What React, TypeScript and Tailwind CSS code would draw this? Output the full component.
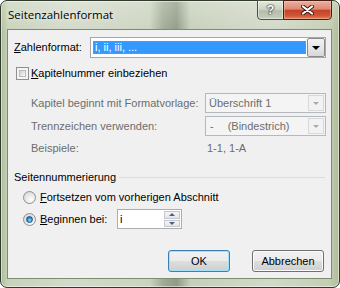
import React from "react";

function Checkbox() {
  return (
    <div className="w-[13px] h-[13px] border border-[#8e8f8f] bg-[#f4f4f4] p-[2px] shrink-0">
      <div className="w-full h-full border border-[#b8bcc0] bg-[linear-gradient(135deg,#cfcfcf_0%,#e9e9e9_60%,#f8f8f8_100%)]" />
    </div>
  );
}

function Radio({ checked }: { checked?: boolean }) {
  return (
    <div className="w-[13px] h-[13px] rounded-full border border-[#8e8f8f] bg-[radial-gradient(circle_at_65%_70%,#ffffff_0%,#e4e4e4_55%,#cfcfcf_100%)] flex items-center justify-center shrink-0">
      {checked && (
        <div className="w-[7px] h-[7px] rounded-full border border-[#1d4f7f] bg-[radial-gradient(circle_at_55%_65%,#8fe3ff_0%,#2c8ad6_55%,#144f8a_100%)]" />
      )}
    </div>
  );
}

function DisabledSelect({ children }: { children: React.ReactNode }) {
  return (
    <div className="w-[121px] h-[20px] border border-[#b5b9bd] bg-[#f4f4f4] flex items-center">
      <div className="flex-1 pl-[3px] text-[#6d6d6d] whitespace-nowrap">{children}</div>
      <div className="w-[16px] h-[16px] mr-[1px] border border-[#d9d9d9] bg-[#f2f2f2] flex items-center justify-center">
        <div className="w-0 h-0 border-l-[3px] border-r-[3px] border-t-[3px] border-l-transparent border-r-transparent border-t-[#a9a9a9]" />
      </div>
    </div>
  );
}

function Button({ children, primary, w }: { children: React.ReactNode; primary?: boolean; w: string }) {
  return (
    <div
      className={
        w +
        " h-[22px] rounded-[3px] border flex items-center justify-center text-black bg-[linear-gradient(180deg,#f2f2f2_0%,#ebebeb_48%,#dddddd_52%,#cfcfcf_100%)] " +
        (primary
          ? "border-[#3c7fb1] shadow-[inset_0_0_0_1px_#9fe3fb]"
          : "border-[#707070] shadow-[inset_0_0_0_1px_#fbfbfb]")
      }
    >
      {children}
    </div>
  );
}

export default function App() {
  return (
    <div className="w-[340px] h-[288px] bg-white">
      <div className="relative flex flex-col w-[340px] h-[288px] rounded-[7px] border border-[#2e3a2b] bg-[linear-gradient(180deg,rgba(255,255,255,0.25)_0%,rgba(255,255,255,0)_12%),linear-gradient(90deg,#aebd97_0%,#c8d2bb_2%,#d3dac9_20%,#cbd3bf_44%,#a0ab95_48%,#8f9b86_52%,#c6cfba_56%,#d2d9c8_80%,#c4ceb3_97%,#aebd97_100%)] shadow-[inset_0_0_0_1px_rgba(255,255,255,0.5)]">
        <div className="h-[28px] flex items-center pl-[7px] pb-[1px] font-['Open_Sans',sans-serif] text-[11.5px] text-black [text-shadow:0_0_5px_rgba(255,255,255,0.95)]">
          Seitenzahlenformat
        </div>

        <div className="absolute top-[-1px] left-[256px] w-[27px] h-[20px] rounded-bl-[4px] border border-[#48523f] bg-[linear-gradient(180deg,#e4e8de_0%,#cdd4c4_45%,#b3bdaa_55%,#c6cfbb_100%)] shadow-[inset_0_0_0_1px_rgba(255,255,255,0.45)] flex items-center justify-center font-['Liberation_Sans',sans-serif] font-bold text-[13px] text-white [text-shadow:0_0_1px_#2a2a2a,0_0_1px_#2a2a2a,0_0_2px_#3a3a3a]">
          ?
        </div>
        <div className="absolute top-[-1px] left-[282px] w-[49px] h-[20px] rounded-br-[4px] border border-[#4c1d12] bg-[linear-gradient(180deg,#eab0a1_0%,#dc8a73_45%,#c6432a_52%,#cf5434_80%,#e28463_100%)] shadow-[inset_0_0_0_1px_rgba(255,220,200,0.35)] flex items-center justify-center">
          <svg width="13" height="10" viewBox="0 0 13 10">
            <path d="M2 1.5 L11 8.5 M11 1.5 L2 8.5" stroke="#3a1a14" strokeWidth="4" strokeLinecap="round" />
            <path d="M2 1.5 L11 8.5 M11 1.5 L2 8.5" stroke="#ffffff" strokeWidth="2.2" strokeLinecap="round" />
          </svg>
        </div>

        <div className="ml-[6px] w-[325px] h-[250px] border border-[#7d8b70] bg-[#f0f0f0] flex flex-col font-['Liberation_Sans',Arial,sans-serif] text-[11px] text-black leading-none">
          {/* Zahlenformat */}
          <div className="mt-[7px] h-[21px] pl-[6px] flex items-center">
            <div className="w-[76px]">
              <span className="underline">Z</span>ahlenformat:
            </div>
            <div className="w-[236px] h-[21px] border border-[#a5a9ae] bg-white flex items-center">
              <div className="ml-[2px] w-[213px] h-[13px] bg-[#3399ff] border border-dotted border-[#d9822b] flex items-center pl-[1px] text-white">
                i, ii, iii, ...
              </div>
              <div className="ml-[1px] w-[18px] h-[19px] rounded-[2px] border border-[#8a8a8a] bg-[linear-gradient(180deg,#f3f3f3_0%,#e6e6e6_50%,#d8d8d8_100%)] flex items-center justify-center">
                <div className="w-0 h-0 border-l-[4px] border-r-[4px] border-t-[4px] border-l-transparent border-r-transparent border-t-black" />
              </div>
            </div>
          </div>

          {/* Kapitelnummer */}
          <div className="mt-[9px] h-[13px] pl-[8px] flex items-center gap-[2px]">
            <Checkbox />
            <div>
              <span className="underline">K</span>apitelnummer einbeziehen
            </div>
          </div>

          <div className="mt-[13px] h-[20px] pl-[23px] flex items-center">
            <div className="w-[174px] text-[#6d6d6d]">Kapitel beginnt mit Formatvorlage:</div>
            <DisabledSelect>Überschrift 1</DisabledSelect>
          </div>
          <div className="mt-[3px] h-[20px] pl-[23px] flex items-center">
            <div className="w-[174px] text-[#6d6d6d]">Trennzeichen verwenden:</div>
            <DisabledSelect>
              <span className="pl-[1px]">-</span>
              <span className="ml-[14px]">(Bindestrich)</span>
            </DisabledSelect>
          </div>
          <div className="mt-[5px] h-[14px] pl-[23px] flex items-center text-[#6d6d6d]">
            <div className="w-[176px]">Beispiele:</div>
            <div>1-1, 1-A</div>
          </div>

          {/* Seitennummerierung */}
          <div className="mt-[15px] h-[14px] pl-[6px] pr-[6px] flex items-center">
            <div>Seitennummerierung</div>
            <div className="flex-1 ml-[3px] h-px bg-[#d5dfe5]" />
          </div>
          <div className="mt-[6px] h-[14px] pl-[15px] flex items-center gap-[4px]">
            <Radio />
            <div>
              <span className="underline">F</span>ortsetzen vom vorherigen Abschnitt
            </div>
          </div>
          <div className="mt-[5px] h-[20px] pl-[15px] flex items-center">
            <Radio checked />
            <div className="ml-[4px] w-[77px]">
              <span className="underline">B</span>eginnen bei:
            </div>
            <div className="w-[65px] h-[20px] border border-[#abadb3] bg-white flex items-center">
              <div className="flex-1 pl-[2px]">i</div>
              <div className="w-[16px] h-[16px] mr-[1px] flex flex-col gap-px">
                <div className="flex-1 border border-[#c4c8ce] bg-[linear-gradient(180deg,#f6f6f6,#e4e4e4)] flex items-center justify-center">
                  <div className="w-0 h-0 border-l-[3px] border-r-[3px] border-b-[3px] border-l-transparent border-r-transparent border-b-[#4a5f87]" />
                </div>
                <div className="flex-1 border border-[#c4c8ce] bg-[linear-gradient(180deg,#f6f6f6,#e4e4e4)] flex items-center justify-center">
                  <div className="w-0 h-0 border-l-[3px] border-r-[3px] border-t-[3px] border-l-transparent border-r-transparent border-t-[#4a5f87]" />
                </div>
              </div>
            </div>
          </div>

          <div className="mt-[21px] pr-[7px] flex justify-end gap-[22px]">
            <Button primary w="w-[62px]">OK</Button>
            <Button w="w-[72px]">Abbrechen</Button>
          </div>
        </div>
      </div>
    </div>
  );
}
